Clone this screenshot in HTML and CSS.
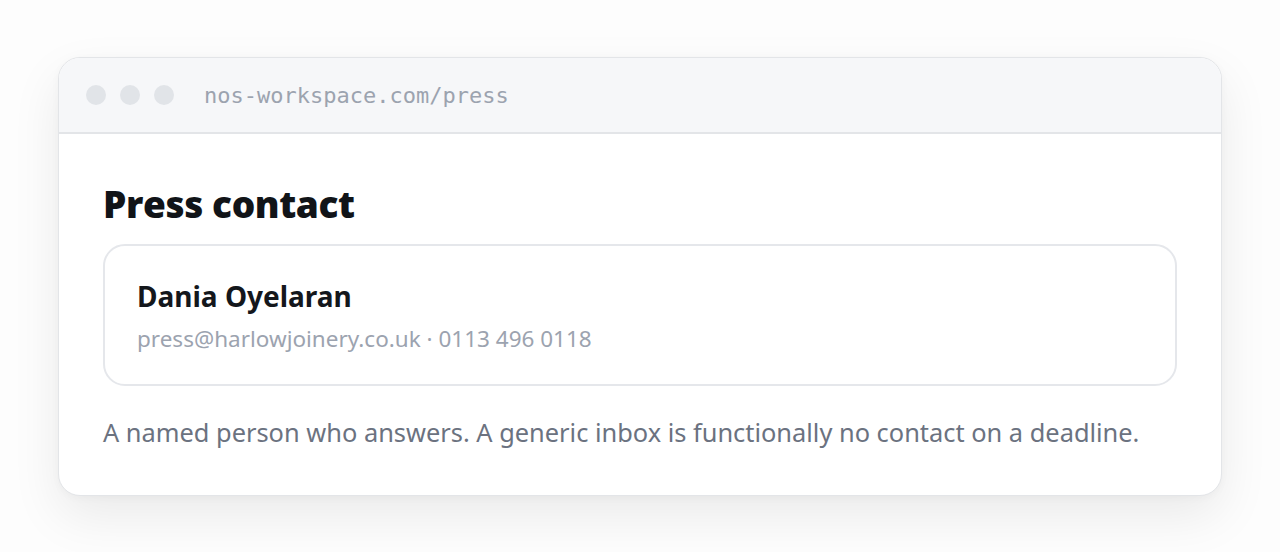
FILE: index.html
```html
<!DOCTYPE html>
<html lang="en">
<head>
<meta charset="utf-8">
<title>Press contact</title>
<link rel="stylesheet" href="styles.css">
</head>
<body>
<main class="stage">
  <section class="window">
    <header class="titlebar">
      <div class="dots">
        <span class="dot"></span><span class="dot"></span><span class="dot"></span>
      </div>
      <span class="url">nos-workspace.com/press</span>
    </header>
    <div class="content">
      <h1 class="title">Press contact</h1>
      <div class="contact-card">
        <div class="name">Dania Oyelaran</div>
        <div class="details">press@harlowjoinery.co.uk · 0113 496 0118</div>
      </div>
      <p class="note">A named person who answers. A generic inbox is functionally no contact on a deadline.</p>
    </div>
  </section>
</main>
</body>
</html>
```
FILE: styles.css
```css
* { box-sizing: border-box; }
html, body { margin: 0; padding: 0; background: #ffffff; }
body { font-family: "Noto Sans", "Open Sans", sans-serif; }
.stage {
  width: 1280px;
  height: 552px;
  padding: 57px 58px 0 58px;
  background: #fdfdfd;
}
.window {
  width: 1164px;
  background: #ffffff;
  border: 1.5px solid #e3e5e8;
  border-radius: 22px;
  overflow: hidden;
  box-shadow: 0 20px 50px rgba(0,0,0,0.08), 0 2px 8px rgba(0,0,0,0.03);
}
.titlebar {
  height: 76px;
  background: #f6f7f9;
  border-bottom: 2px solid #e3e5e8;
  display: flex;
  align-items: center;
  padding-left: 27px;
}
.dots { display: flex; gap: 14px; }
.dot { width: 20px; height: 20px; border-radius: 50%; background: #e1e4e8; }
.url {
  margin-left: 30px;
  font-family: "DejaVu Sans Mono", "Liberation Mono", monospace;
  font-size: 22px;
  color: #9ca3af;
}
.content { padding: 48px 44px 46px 44px; }
.title {
  margin: 0;
  font-family: "Open Sans", sans-serif;
  font-weight: 800;
  font-size: 37px;
  line-height: 44px;
  color: #111418;
  letter-spacing: -0.4px;
}
.contact-card {
  margin-top: 18px;
  border: 2px solid #e5e7eb;
  border-radius: 22px;
  padding: 32px 32px 30px 32px;
}
.name {
  font-weight: 700;
  font-size: 28px;
  line-height: 36px;
  color: #14171c;
}
.details {
  margin-top: 10px;
  font-size: 22.5px;
  line-height: 30px;
  color: #9ca3af;
}
.note {
  margin: 29px 0 0 0;
  font-size: 25.4px;
  line-height: 34px;
  color: #6b7280;
}
```
